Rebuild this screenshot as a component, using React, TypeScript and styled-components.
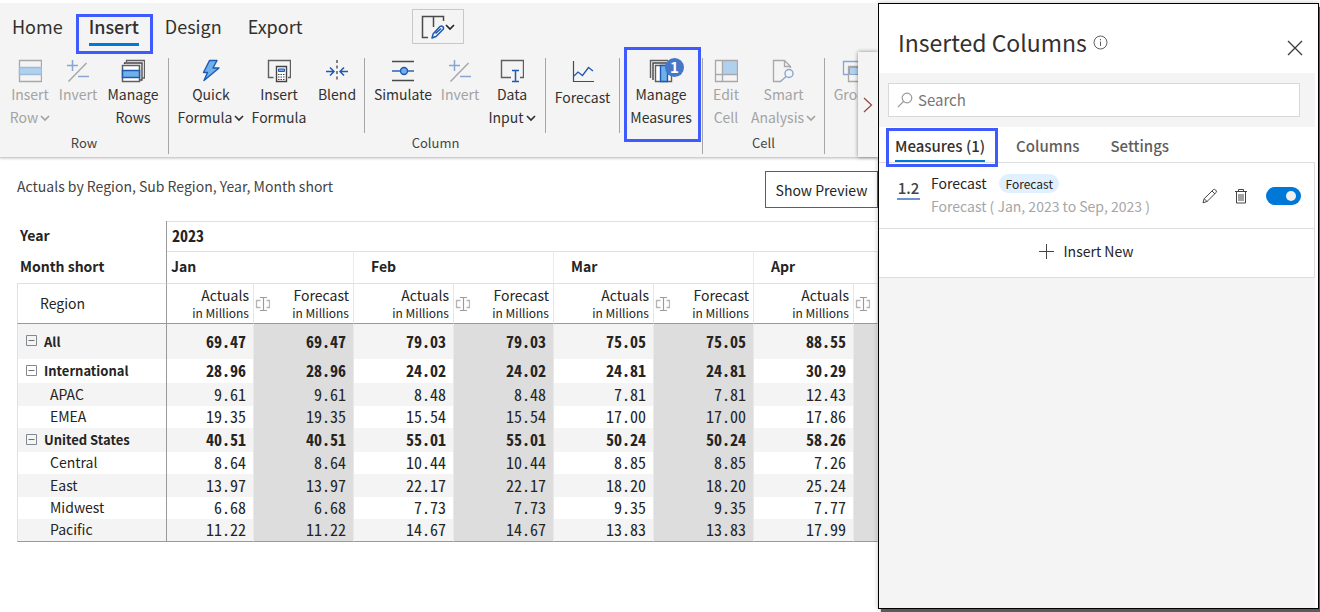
import React from "react";
import styled, { createGlobalStyle, css } from "styled-components";

const GlobalStyle = createGlobalStyle`
  *, *::before, *::after { box-sizing: border-box; }
  body {
    margin: 0;
    background: #fff;
    color: #252423;
    font-family: "Noto Sans CJK SC", "Noto Sans", sans-serif;
    font-size: 14px;
    line-height: 23px;
  }
  button, input { font: inherit; color: inherit; }
`;

const accent = "#0078d7";
const markColor = "#3f5bff";

const Page = styled.div`
  display: grid;
  grid-template-columns: minmax(0, 1fr) 441px;
  min-height: 100vh;
  overflow: hidden;
  padding: 3px 1px 3px 0;
`;

const Main = styled.main`
  min-width: 0;
  overflow: hidden;
`;

const Mark = styled.span<{ $inset: string }>`
  position: absolute;
  inset: ${(p) => p.$inset};
  border: 3px solid ${markColor};
  pointer-events: none;
`;

/* ---------- ribbon ---------- */

const Ribbon = styled.header`
  position: relative;
  background: #f4f4f4;
  border-bottom: 1px solid #cfcfcf;
  box-shadow: 0 1px 2px rgba(0, 0, 0, 0.16);
`;

const TabBar = styled.nav`
  display: flex;
  align-items: flex-start;
  height: 55px;
  padding: 6px 12px 0;
`;

const RibbonTab = styled.button<{ $active?: boolean }>`
  position: relative;
  flex: none;
  height: 38px;
  margin-right: 26px;
  padding: 0 0 4px;
  border: 0;
  background: none;
  color: #323130;
  font-size: 18px;
  line-height: 34px;
  ${(p) =>
    p.$active &&
    css`
      font-weight: 500;
      &::after {
        content: "";
        position: absolute;
        left: 0;
        right: 0;
        bottom: 1px;
        height: 3px;
        background: ${accent};
      }
    `}
`;

const ModeButton = styled.button`
  display: flex;
  align-items: center;
  justify-content: center;
  width: 52px;
  height: 35px;
  margin-left: 84px;
  padding: 0;
  border: 1px solid #c8c8c8;
  background: none;
`;

const Groups = styled.div`
  display: flex;
  height: 99px;
`;

const Group = styled.section`
  display: flex;
  flex: none;
  flex-direction: column;
  height: 96px;
  border-right: 1px solid #a6a6a6;
`;

const Tools = styled.div`
  display: flex;
  height: 75px;
`;

const SubGroup = styled.div<{ $line?: boolean; $pad?: string }>`
  display: flex;
  height: 75px;
  padding: ${(p) => p.$pad || "0"};
  border-right: ${(p) => (p.$line ? "1px solid #a6a6a6" : "0")};
`;

const GroupLabel = styled.span`
  font-size: 13px;
  line-height: 20px;
  text-align: center;
  color: #444;
`;

const ToolButton = styled.button<{ $width: number; $gap?: number }>`
  position: relative;
  display: flex;
  flex: none;
  flex-direction: column;
  align-items: center;
  gap: ${(p) => p.$gap || 0}px;
  width: ${(p) => p.$width}px;
  padding: 1px 0 0;
  border: 0;
  background: none;
  color: #323130;
  white-space: nowrap;
  &:disabled { color: #a3a3a3; }
  svg { display: block; flex: none; }
`;

const ToolLine = styled.span`
  display: flex;
  align-items: center;
  gap: 2px;
`;

const LineText = styled.span`
  flex: 1;
  text-align: center;
`;

const CountBadge = styled.span`
  position: absolute;
  top: 0;
  right: 18px;
  width: 19px;
  height: 19px;
  border-radius: 50%;
  background: #4577c9;
  color: #fff;
  font-size: 15px;
  font-weight: 700;
  line-height: 17px;
  text-align: center;
`;

const ScrollRight = styled.button`
  position: absolute;
  top: 49px;
  right: 0;
  bottom: 0;
  display: flex;
  align-items: center;
  justify-content: center;
  width: 20px;
  padding: 0;
  border: 0;
  background: #f4f4f4;
  box-shadow: 0 0 4px rgba(0, 0, 0, 0.45);
`;

/* ---------- report ---------- */

const ReportHead = styled.div`
  display: flex;
  align-items: flex-start;
  justify-content: space-between;
  height: 63px;
  padding: 13px 0 0 17px;
`;

const ReportTitle = styled.h1`
  margin: 0;
  font-size: 14px;
  font-weight: 400;
  line-height: 30px;
  color: #444;
`;

const PreviewButton = styled.button`
  width: 113px;
  height: 37px;
  padding: 1px 0 0;
  border: 1px solid #605e5c;
  background: #fff;
`;

const TableWrap = styled.div`
  padding-left: 17px;
`;

const Matrix = styled.table`
  width: 100%;
  table-layout: fixed;
  border-collapse: separate;
  border-spacing: 0;
  th, td { padding: 0; font-weight: 400; white-space: nowrap; }
`;

const AxisName = styled.th`
  && { padding: 0 0 2px 3px; font-weight: 700; }
  text-align: left;
  border-right: 1px solid #999;
`;

const YearCell = styled.th`
  && { padding: 0 0 2px 5px; font-weight: 700; }
  height: 31px;
  font-size: 16px;
  font-feature-settings: "hwid";
  text-align: left;
  border-top: 1px solid #e0e0e0;
  border-bottom: 1px solid #e0e0e0;
`;

const MonthCell = styled.th<{ $first: boolean }>`
  && { padding: 0 0 2px ${(p) => (p.$first ? 4 : 17)}px; font-weight: 700; }
  height: 31px;
  text-align: left;
  border-right: 1px solid #ececec;
`;

const RegionHead = styled.th`
  && { padding-left: 22px; }
  text-align: left;
  border: 1px solid #e0e0e0;
  border-right-color: #999;
  border-bottom-color: #999;
`;

const MeasureHead = styled.th`
  height: 41px;
  border-top: 1px solid #e0e0e0;
  border-right: 1px solid #e6e6e6;
  border-bottom: 1px solid #999;
`;

const MeasureHeadInner = styled.div`
  display: flex;
  align-items: center;
  justify-content: flex-end;
  padding-right: 4px;
`;

const MeasureText = styled.span`
  display: flex;
  flex-direction: column;
  align-items: flex-end;
  line-height: 18px;
  small { font-size: 12px; line-height: 18px; }
`;

const ResizeButton = styled.button`
  display: flex;
  margin-right: auto;
  padding: 0;
  border: 0;
  background: none;
`;

const Row = styled.tr<{ $height: number; $strong?: boolean }>`
  height: ${(p) => p.$height}px;
  line-height: 20px;
  &:nth-child(odd) { background: #f4f4f4; }
  && th, && td { font-weight: ${(p) => (p.$strong ? 700 : 400)}; }
  && th {
    padding-bottom: ${(p) => (p.$strong ? 0 : 2)}px;
    font-size: ${(p) => (p.$strong ? 13 : 14)}px;
  }
  &:last-child th, &:last-child td { border-bottom: 1px solid #999; }
`;

const RowName = styled.th<{ $level: number }>`
  && { padding-left: ${(p) => (p.$level ? 32 : 8)}px; }
  text-align: left;
  border-left: 1px solid #e0e0e0;
  border-right: 1px solid #999;
`;

const RowNameInner = styled.span`
  display: flex;
  align-items: center;
  gap: 7px;
`;

const Toggler = styled.button`
  display: flex;
  padding: 0 0 2px;
  border: 0;
  background: none;
`;

const Value = styled.td<{ $forecast?: boolean }>`
  && { padding: 0 7px 2px 0; }
  font-size: 16px;
  font-feature-settings: "hwid";
  text-align: right;
  border-right: 1px solid #e9e9e9;
  ${(p) => p.$forecast && "background: #ddd;"}
`;

/* ---------- side panel ---------- */

const Panel = styled.aside`
  display: flex;
  flex-direction: column;
  padding-right: 3px;
  border: 1px solid #000;
  background: #fff;
  box-shadow: 3px 4px 1px #5a5a5a, 0 0 5px rgba(0, 0, 0, 0.25);
`;

const PanelHead = styled.div`
  display: flex;
  justify-content: space-between;
  height: 69px;
  padding: 20px 12px 0 19px;
`;

const PanelTitle = styled.h2`
  display: flex;
  gap: 6px;
  margin: 0;
  font-size: 23px;
  font-weight: 400;
  line-height: 36px;
  color: #323130;
  svg { margin-top: 11px; }
`;

const IconButton = styled.button`
  display: flex;
  align-items: center;
  padding: 0;
  border: 0;
  background: none;
`;

const CloseButton = styled(IconButton)`
  height: 48px;
`;

const SearchBand = styled.div`
  padding: 10px 15px 10px 9px;
  background: #f4f4f4;
`;

const SearchField = styled.label`
  display: flex;
  align-items: center;
  gap: 5px;
  height: 34px;
  padding-left: 8px;
  border: 1px solid #d8d8d8;
  background: #fff;
`;

const SearchInput = styled.input`
  flex: 1;
  min-width: 0;
  padding: 0 0 2px;
  border: 0;
  outline: 0;
  background: none;
  font-size: 15px;
  &::placeholder { color: #767676; opacity: 1; }
`;

const PanelTabs = styled.nav`
  display: flex;
  gap: 31px;
  height: 36px;
  padding-left: 16px;
  border-bottom: 1px solid #ddd;
`;

const PanelTab = styled.button<{ $active?: boolean }>`
  position: relative;
  height: 35px;
  padding: 0;
  border: 0;
  background: none;
  font-size: 15px;
  font-weight: 500;
  line-height: 38px;
  color: ${(p) => (p.$active ? "#323130" : "#605e5c")};
  ${(p) =>
    p.$active &&
    css`
      &::after {
        content: "";
        position: absolute;
        left: 0;
        right: 0;
        bottom: 0;
        height: 2px;
        background: ${accent};
      }
    `}
`;

const List = styled.div`
  background: #fff;
  border-right: 1px solid #ddd;
`;

const Item = styled.div`
  display: flex;
  align-items: center;
  height: 66px;
  padding: 0 13px 0 18px;
  border-bottom: 1px solid #ddd;
`;

const NumberType = styled.span`
  width: 23px;
  margin: 0 11px 13px 0;
  border-bottom: 2px solid #6a93cf;
  font-size: 15px;
  font-weight: 500;
  line-height: 20px;
  text-align: center;
  color: #444;
`;

const ItemText = styled.div`
  flex: 1;
  margin-bottom: 1px;
  p { margin: 0; color: #a6a6a6; }
`;

const ItemName = styled.div`
  display: flex;
  align-items: center;
  gap: 13px;
`;

const Pill = styled.span`
  padding: 0 6px;
  border-radius: 10px;
  background: #e0f0fe;
  font-size: 12px;
  line-height: 19px;
`;

const Actions = styled.div`
  display: flex;
  align-items: center;
  gap: 15px;
`;

const Switch = styled.input`
  appearance: none;
  position: relative;
  width: 35px;
  height: 18px;
  margin: 0 0 0 2px;
  border-radius: 9px;
  background: ${accent};
  &::before {
    content: "";
    position: absolute;
    top: 4px;
    right: 5px;
    width: 10px;
    height: 10px;
    border-radius: 50%;
    background: #f0f0f0;
  }
`;

const InsertNew = styled.button`
  display: flex;
  align-items: center;
  justify-content: center;
  gap: 10px;
  width: 100%;
  height: 49px;
  padding: 0 22px 4px 0;
  border: 0;
  border-bottom: 1px solid #ddd;
  background: #fff;
`;

const PanelRest = styled.div`
  flex: 1;
  background: #f4f4f4;
`;

/* ---------- icons ---------- */

type IconProps = { size?: number; children: React.ReactNode; faded?: boolean };
const Icon = ({ size = 24, children, faded }: IconProps) => (
  <svg width={size} height={size} viewBox={`0 0 ${size} ${size}`} fill="none" opacity={faded ? 0.5 : 1} aria-hidden="true">
    {children}
  </svg>
);

const grey = "#5f5f5f";
const blue = "#1e5ab0";
const sky = "#6fb0ea";

const Chevron = () => (
  <svg width="10" height="8" viewBox="0 0 10 8" fill="none" aria-hidden="true">
    <path d="M1 2l4 4 4-4" stroke="currentColor" strokeWidth="1.7" />
  </svg>
);

const InsertRowIcon = () => (
  <Icon faded>
    <path d="M1.500 1.500h22v21h-22z" stroke={grey} strokeWidth="1.3" />
    <path d="M1.500 8.500h22v7h-22z" stroke="#4a83c4" fill={sky} strokeWidth="1.3" />
  </Icon>
);
const InvertIcon = () => (
  <Icon faded>
    <path d="M2.500 22.500L20.500 4" stroke={grey} strokeWidth="1.5" />
    <path d="M1 6.500h11M6.500 1v11M12 17.500h11" stroke={blue} strokeWidth="1.5" />
  </Icon>
);
const ManageRowsIcon = () => (
  <Icon>
    <path d="M5.500 3V1.500h18v17.500H21.500" stroke={grey} strokeWidth="1.3" />
    <path d="M3.500 5V4h17.500v17H19" stroke="#444" strokeWidth="1.3" />
    <path d="M1.500 6.500h17v16h-17z" stroke={grey} fill="#fff" strokeWidth="1.5" />
    <path d="M1.500 11.500h17v7h-17z" stroke={blue} fill={sky} strokeWidth="1.5" />
  </Icon>
);
const BoltIcon = () => (
  <Icon>
    <path d="M10.500 1.500h7.500l-4 7.500h6L5 21.500l3.500-8H4.500z" fill={sky} stroke={blue} strokeWidth="1.4" strokeLinejoin="round" />
  </Icon>
);
const FormulaIcon = () => (
  <Icon>
    <path d="M6.500 18.500H1.500v-17h22v17H21" stroke={grey} strokeWidth="1.4" />
    <path d="M9.500 7.500h10v15h-10z" fill="#fff" stroke="#444" strokeWidth="1.4" />
    <path d="M11.500 10h6v2.500h-6z" fill={sky} stroke={blue} />
    <path d="M11 15.500h1.500m1 0h1.500m1 0h1.500M11 18h1.500m1 0h1.500m1 0h1.500M11 20.500h1.500m1 0h1.500m1 0h1.500" stroke="#444" />
  </Icon>
);
const BlendIcon = () => (
  <Icon>
    <path d="M12 1v22" stroke="#444" strokeWidth="1.3" strokeDasharray="3 2.500" />
    <path d="M1 12.500h8M5 8.500l4 4-4 4M23 12.500h-8M19 8.500l-4 4 4 4" stroke={blue} strokeWidth="1.5" />
  </Icon>
);
const SimulateIcon = () => (
  <Icon>
    <path d="M1 2.500h22M1 21.500h22" stroke="#4a4a4a" strokeWidth="1.4" />
    <path d="M1 12h22" stroke={blue} strokeWidth="1.4" />
    <circle cx="13" cy="12" r="3.500" fill={sky} stroke={blue} strokeWidth="1.4" />
  </Icon>
);
const DataInputIcon = () => (
  <Icon>
    <path d="M11 18.500H1.500v-17h22v17H20" stroke={grey} strokeWidth="1.4" />
    <path d="M12 11.500h7M12 22.500h7M15.500 11.500v11" stroke={blue} strokeWidth="1.5" />
  </Icon>
);
const ForecastIcon = () => (
  <Icon>
    <path d="M2.500 2v21M2 22.500h21" stroke="#4a4a4a" strokeWidth="1.2" />
    <path d="M3 17l4-4 4.500 3.500 6-8 4.500 3.500" stroke={blue} strokeWidth="1.3" />
  </Icon>
);
const ManageMeasuresIcon = () => (
  <Icon>
    <path d="M1.500 19V1.500H19" stroke={grey} strokeWidth="1.4" />
    <path d="M4 21V4H21" stroke="#444" strokeWidth="1.4" />
    <path d="M6.500 6.500h16v16h-16z" stroke={grey} fill="#fff" strokeWidth="1.4" />
    <path d="M11.500 6.500h7v16h-7z" fill={sky} stroke={blue} strokeWidth="1.4" />
  </Icon>
);
const EditCellIcon = () => (
  <Icon faded>
    <path d="M8.500 1.500h15v14h-15z" fill={sky} />
    <path d="M1.500 1.500h22v21h-22zM8.500 1.500v21M1.500 15.500h22" stroke={grey} strokeWidth="1.3" />
  </Icon>
);
const SmartIcon = () => (
  <Icon faded>
    <path d="M9 22.500H1.500v-21h11l6 6V9M12.500 1.500v6h6" stroke={grey} strokeWidth="1.3" />
    <circle cx="17" cy="14.500" r="4" stroke={blue} strokeWidth="1.4" />
    <path d="M14 17.500l-5.500 5" stroke={blue} strokeWidth="1.4" />
  </Icon>
);
const GroupIcon = () => (
  <Icon faded>
    <path d="M6 15.500H1.500v-13h17V6" stroke={blue} strokeWidth="1.3" />
    <path d="M6.500 7.500h17v15h-17z" stroke={grey} strokeWidth="1.3" />
    <path d="M7.500 8.500h12v7h-12z" fill={sky} stroke={blue} />
  </Icon>
);
const EditModeIcon = () => (
  <Icon>
    <path d="M7 22.500H1.500v-21h21V6M12.500 1.500V12" stroke="#4a4a4a" strokeWidth="1.5" />
    <path d="M19 11.500c1.800-1.600 4.600 1 3 3L15 21.500 11 23l1.200-4.200zM14.500 18.500l5.500-5" stroke={blue} strokeWidth="1.5" strokeLinejoin="round" />
  </Icon>
);
const ResizeIcon = () => (
  <Icon size={16}>
    <path d="M6.500 11.500h-4v-7h4M12.500 4.500h3v7h-3" stroke="#b5b5b5" strokeWidth="1.3" />
    <path d="M6 1.500h7M6 14.500h7M9.500 1.500v13" stroke="#9c9c9c" strokeWidth="1.2" />
  </Icon>
);
const CollapseIcon = () => (
  <Icon size={11}>
    <path d="M.5.500h10v10H.5z" stroke="#808890" />
    <path d="M2.500 5.500h6" stroke="#707070" />
  </Icon>
);
const InfoIcon = () => (
  <Icon size={15}>
    <circle cx="7.500" cy="7.500" r="6.500" stroke="#605e5c" />
    <path d="M7.500 6.500v4.500M7.500 4v1.300" stroke="#605e5c" />
  </Icon>
);
const CloseIcon = () => (
  <Icon size={16}>
    <path d="M1 1l14 14M15 1L1 15" stroke="#3b3a39" strokeWidth="1.3" />
  </Icon>
);
const SearchIcon = () => (
  <Icon size={16}>
    <circle cx="10" cy="6" r="4.800" stroke="#9a9a9a" strokeWidth="1.2" />
    <path d="M6.500 9.500L.8 15.200" stroke="#9a9a9a" strokeWidth="1.2" />
  </Icon>
);
const PencilIcon = () => (
  <Icon size={16}>
    <path d="M11.500 1.500c1-1 3.800 1.500 2.800 2.800L5 13.500l-4 1.300 1.200-4.100zM10 3l3 3M2.200 10.700L5 13.500" stroke="#444" strokeLinejoin="round" />
  </Icon>
);
const TrashIcon = () => (
  <Icon size={16}>
    <path d="M2 3.500h12M5.500 3.500v-2h5v2M3.500 3.500v11.500h9V3.500M6 6v7M8 6v7M10 6v7" stroke="#444" />
  </Icon>
);
const PlusIcon = () => (
  <Icon size={16}>
    <path d="M8.500 1v15M1 8.500h15" stroke="#444" />
  </Icon>
);

/* ---------- data ---------- */

const months = ["Jan", "Feb", "Mar", "Apr"];

type DataRow = { name: string; level: number; height: number; values: string[] };
const rows: DataRow[] = [
  { name: "All", level: 0, height: 35, values: ["69.47", "79.03", "75.05", "88.55"] },
  { name: "International", level: 0, height: 24, values: ["28.96", "24.02", "24.81", "30.29"] },
  { name: "APAC", level: 1, height: 23, values: ["9.61", "8.48", "7.81", "12.43"] },
  { name: "EMEA", level: 1, height: 22, values: ["19.35", "15.54", "17.00", "17.86"] },
  { name: "United States", level: 0, height: 24, values: ["40.51", "55.01", "50.24", "58.26"] },
  { name: "Central", level: 1, height: 22, values: ["8.64", "10.44", "8.85", "7.26"] },
  { name: "East", level: 1, height: 23, values: ["13.97", "22.17", "18.20", "25.24"] },
  { name: "Midwest", level: 1, height: 22, values: ["6.68", "7.73", "9.35", "7.77"] },
  { name: "Pacific", level: 1, height: 23, values: ["11.22", "14.67", "13.83", "17.99"] },
];

type ToolProps = {
  icon: React.ReactNode;
  lines: string[];
  width: number;
  gap?: number;
  disabled?: boolean;
  menu?: boolean;
  children?: React.ReactNode;
};
const Tool = ({ icon, lines, width, gap, disabled, menu, children }: ToolProps) => (
  <ToolButton type="button" $width={width} $gap={gap} disabled={disabled}>
    {icon}
    <span>
      {lines.map((line, i) => (
        <ToolLine key={line}>
          <LineText>{line}</LineText>
          {menu && i === lines.length - 1 && <Chevron />}
        </ToolLine>
      ))}
    </span>
    {children}
  </ToolButton>
);

const RibbonView = () => (
  <Ribbon>
    <TabBar>
      <RibbonTab type="button">Home</RibbonTab>
      <RibbonTab type="button" $active>
        Insert
        <Mark $inset="5px -14px -7px -13px" />
      </RibbonTab>
      <RibbonTab type="button">Design</RibbonTab>
      <RibbonTab type="button">Export</RibbonTab>
      <ModeButton type="button" aria-label="Edit mode">
        <EditModeIcon />
        <Chevron />
      </ModeButton>
    </TabBar>
    <Groups>
      <Group>
        <Tools>
          <SubGroup $pad="0 4px 0 6px">
            <Tool icon={<InsertRowIcon />} lines={["Insert", "Row"]} width={48} disabled menu />
            <Tool icon={<InvertIcon />} lines={["Invert"]} width={48} disabled />
            <Tool icon={<ManageRowsIcon />} lines={["Manage", "Rows"]} width={62} />
          </SubGroup>
        </Tools>
        <GroupLabel>Row</GroupLabel>
      </Group>
      <Group>
        <Tools>
          <SubGroup $line $pad="0 1px 0 6px">
            <Tool icon={<BoltIcon />} lines={["Quick", "Formula"]} width={72} menu />
            <Tool icon={<FormulaIcon />} lines={["Insert", "Formula"]} width={64} />
            <Tool icon={<BlendIcon />} lines={["Blend"]} width={52} />
          </SubGroup>
          <SubGroup $line>
            <Tool icon={<SimulateIcon />} lines={["Simulate"]} width={76} />
            <Tool icon={<InvertIcon />} lines={["Invert"]} width={38} disabled />
            <Tool icon={<DataInputIcon />} lines={["Data", "Input"]} width={66} menu />
          </SubGroup>
          <SubGroup $line>
            <Tool icon={<ForecastIcon />} lines={["Forecast"]} width={73} gap={3} />
          </SubGroup>
          <SubGroup>
            <Tool icon={<ManageMeasuresIcon />} lines={["Manage", "Measures"]} width={82}>
              <CountBadge>1</CountBadge>
              <Mark $inset="-11px 1px -9px 4px" />
            </Tool>
          </SubGroup>
        </Tools>
        <GroupLabel>Column</GroupLabel>
      </Group>
      <Group>
        <Tools>
          <SubGroup $pad="0 5px 0 1px">
            <Tool icon={<EditCellIcon />} lines={["Edit", "Cell"]} width={44} disabled />
            <Tool icon={<SmartIcon />} lines={["Smart", "Analysis"]} width={71} disabled menu />
          </SubGroup>
        </Tools>
        <GroupLabel>Cell</GroupLabel>
      </Group>
      <Tool icon={<GroupIcon />} lines={["Group"]} width={58} disabled />
    </Groups>
    <ScrollRight type="button" aria-label="More tools">
      <svg width="10" height="16" viewBox="0 0 10 16" fill="none" aria-hidden="true">
        <path d="M1 1l7.500 7L1 15" stroke="#8a4a3c" strokeWidth="1.200" />
      </svg>
    </ScrollRight>
  </Ribbon>
);

const MatrixView = () => (
  <TableWrap>
    <Matrix>
      <colgroup>
        <col width="150" />
        <col width="87" />
        {[1, 2, 3, 4, 5, 6].map((n) => (
          <col key={n} width="100" />
        ))}
        <col />
      </colgroup>
      <thead>
        <tr>
          <AxisName scope="row">Year</AxisName>
          <YearCell colSpan={8}>2023</YearCell>
        </tr>
        <tr>
          <AxisName scope="row">Month short</AxisName>
          {months.map((m, i) => (
            <MonthCell key={m} colSpan={2} $first={i === 0}>
              {m}
            </MonthCell>
          ))}
        </tr>
        <tr>
          <RegionHead scope="col">Region</RegionHead>
          {months.map((m, i) => (
            <React.Fragment key={m}>
              <MeasureHead scope="col">
                <MeasureHeadInner>
                  <MeasureText>
                    Actuals
                    <small>in Millions</small>
                  </MeasureText>
                </MeasureHeadInner>
              </MeasureHead>
              <MeasureHead scope="col">
                <MeasureHeadInner>
                  <ResizeButton type="button" aria-label="Insert column">
                    <ResizeIcon />
                  </ResizeButton>
                  {i < months.length - 1 && (
                    <MeasureText>
                      Forecast
                      <small>in Millions</small>
                    </MeasureText>
                  )}
                </MeasureHeadInner>
              </MeasureHead>
            </React.Fragment>
          ))}
        </tr>
      </thead>
      <tbody>
        {rows.map((r) => (
          <Row key={r.name} $height={r.height} $strong={r.level === 0}>
            <RowName scope="row" $level={r.level}>
              <RowNameInner>
                {r.level === 0 && (
                  <Toggler type="button" aria-label={`Collapse ${r.name}`}>
                    <CollapseIcon />
                  </Toggler>
                )}
                {r.name}
              </RowNameInner>
            </RowName>
            {r.values.map((v, i) => (
              <React.Fragment key={months[i]}>
                <Value>{v}</Value>
                <Value $forecast>{i < months.length - 1 ? v : null}</Value>
              </React.Fragment>
            ))}
          </Row>
        ))}
      </tbody>
    </Matrix>
  </TableWrap>
);

const PanelView = () => (
  <Panel>
    <PanelHead>
      <PanelTitle>
        Inserted Columns
        <InfoIcon />
      </PanelTitle>
      <CloseButton type="button" aria-label="Close">
        <CloseIcon />
      </CloseButton>
    </PanelHead>
    <SearchBand>
      <SearchField>
        <SearchIcon />
        <SearchInput type="text" placeholder="Search" aria-label="Search" />
      </SearchField>
    </SearchBand>
    <PanelTabs>
      <PanelTab type="button" $active>
        Measures (1)
        <Mark $inset="1px -13px -5px -9px" />
      </PanelTab>
      <PanelTab type="button">Columns</PanelTab>
      <PanelTab type="button">Settings</PanelTab>
    </PanelTabs>
    <List>
      <Item>
        <NumberType>1.2</NumberType>
        <ItemText>
          <ItemName>
            Forecast
            <Pill>Forecast</Pill>
          </ItemName>
          <p>Forecast ( Jan, 2023 to Sep, 2023 )</p>
        </ItemText>
        <Actions>
          <IconButton type="button" aria-label="Edit">
            <PencilIcon />
          </IconButton>
          <IconButton type="button" aria-label="Delete">
            <TrashIcon />
          </IconButton>
          <Switch type="checkbox" defaultChecked aria-label="Show Forecast" />
        </Actions>
      </Item>
      <InsertNew type="button">
        <PlusIcon />
        Insert New
      </InsertNew>
    </List>
    <PanelRest />
  </Panel>
);

export default function App() {
  return (
    <>
      <GlobalStyle />
      <Page>
        <Main>
          <RibbonView />
          <ReportHead>
            <ReportTitle>Actuals by Region, Sub Region, Year, Month short</ReportTitle>
            <PreviewButton type="button">Show Preview</PreviewButton>
          </ReportHead>
          <MatrixView />
        </Main>
        <PanelView />
      </Page>
    </>
  );
}
